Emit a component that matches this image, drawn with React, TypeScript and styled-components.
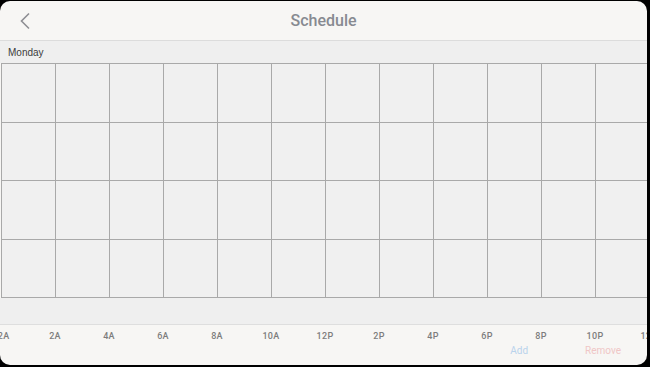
import React from "react";
import styled, { createGlobalStyle } from "styled-components";

const GlobalStyle = createGlobalStyle`
  html, body {
    margin: 0;
    padding: 0;
    background: #000;
    font-family: "Liberation Sans", Arial, sans-serif;
  }
`;

const Screen = styled.div`
  width: 647px;
  height: 364px;
  margin-top: 1px;
  border-radius: 10px;
  overflow: hidden;
  background: #f7f6f4;
  display: flex;
  flex-direction: column;
`;

const Header = styled.div`
  height: 39px;
  border-bottom: 1px solid #dcdcdc;
  display: flex;
  align-items: center;
  justify-content: center;
  position: relative;
`;

const BackButton = styled.button`
  position: absolute;
  left: 16px;
  top: 10px;
  width: 18px;
  height: 20px;
  padding: 0;
  border: none;
  background: none;
  display: flex;
  align-items: center;
  justify-content: center;
`;

const Title = styled.h1`
  margin: 0;
  font-family: Roboto, "Liberation Sans", sans-serif;
  font-size: 16px;
  font-weight: 500;
  color: #878a91;
`;

const DayBar = styled.div`
  height: 22px;
  background: #efefef;
  display: flex;
  align-items: center;
  padding-left: 8px;
  font-size: 10px;
  color: #3c3c3c;
`;

const Grid = styled.div`
  display: grid;
  grid-template-columns: repeat(12, 54px);
  grid-template-rows: 59px 58px 59px 58px;
  margin-left: 1px;
  border-left: 1px solid #a9a9a9;
  border-top: 1px solid #a9a9a9;
  background: #efefef;
`;

const Cell = styled.div`
  border-right: 1px solid #a9a9a9;
  border-bottom: 1px solid #a9a9a9;
  background: #f0f0f0;
`;

const Spacer = styled.div`
  height: 26px;
  background: #efefef;
  border-bottom: 1px solid #dedede;
`;

const Footer = styled.div`
  flex: 1;
  display: flex;
  flex-direction: column;
`;

const Ticks = styled.div`
  display: flex;
  margin-left: -26px;
  margin-top: 4px;
  height: 14px;
  align-items: center;
`;

const Tick = styled.span`
  flex: 0 0 54px;
  text-align: center;
  font-family: Roboto, "Liberation Sans", sans-serif;
  font-size: 9px;
  font-weight: 500;
  color: #7d7d7d;
  letter-spacing: 0.3px;
`;

const Actions = styled.div`
  display: flex;
  justify-content: flex-end;
  padding-right: 26px;
  gap: 57px;
  margin-top: 2px;
`;

const ActionButton = styled.button<{ $tone: "add" | "remove" }>`
  border: none;
  background: none;
  padding: 0;
  font-family: Roboto, "Liberation Sans", sans-serif;
  font-size: 10px;
  color: ${(p) => (p.$tone === "add" ? "#b9d3ec" : "#f0c6c6")};
`;

const ticks = ["12A", "2A", "4A", "6A", "8A", "10A", "12P", "2P", "4P", "6P", "8P", "10P", "12A"];

export default function App() {
  return (
    <>
      <GlobalStyle />
      <Screen>
        <Header>
          <BackButton>
            <svg width="12" height="18" viewBox="0 0 12 18">
              <path d="M10 1.5 L2.5 9 L10 16.5" fill="none" stroke="#8e8e93" strokeWidth="1.6" />
            </svg>
          </BackButton>
          <Title>Schedule</Title>
        </Header>
        <DayBar>Monday</DayBar>
        <Grid>
          {Array.from({ length: 48 }).map((_, i) => (
            <Cell key={i} />
          ))}
        </Grid>
        <Spacer />
        <Footer>
          <Ticks>
            {ticks.map((t, i) => (
              <Tick key={i}>{t}</Tick>
            ))}
          </Ticks>
          <Actions>
            <ActionButton $tone="add">Add</ActionButton>
            <ActionButton $tone="remove">Remove</ActionButton>
          </Actions>
        </Footer>
      </Screen>
    </>
  );
}
